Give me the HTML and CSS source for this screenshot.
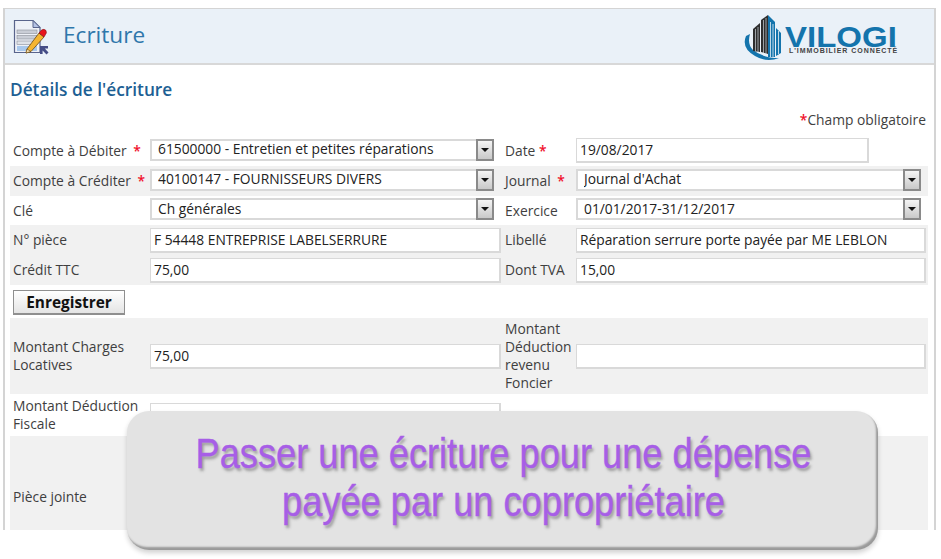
FILE: index.html
```html
<!DOCTYPE html>
<html lang="fr">
<head>
<meta charset="utf-8">
<title>Ecriture</title>
<link rel="stylesheet" href="styles.css">
</head>
<body>
<main class="panel">
  <header class="head">
    <svg class="doc-icon" viewBox="0 0 36 36" width="36" height="36" aria-hidden="true">
      <path d="M1.5 1.500H20L27 8.500V33.500H1.500Z" fill="#eef1f8" stroke="#59648c" stroke-width="1.200"/>
      <path d="M20 1.500V8.500H27Z" fill="#b4c2e4" stroke="#59648c" stroke-width="1"/>
      <rect x="4" y="11" width="20" height="3.500" fill="#c9cdd6" stroke="#8b8f99" stroke-width=".6"/>
      <rect x="4" y="16.500" width="20" height="3.500" fill="#c9cdd6" stroke="#8b8f99" stroke-width=".6"/>
      <rect x="4" y="22" width="20" height="3.500" fill="#dfe2e8" stroke="#8b8f99" stroke-width=".6"/>
      <rect x="4" y="27" width="20" height="5" fill="#a9c8ec"/>
      <path d="M14 30L26 14L31 18L18 32.500L13 34Z" fill="#f5b532" stroke="#6b4a12" stroke-width=".8"/>
      <path d="M14 30L18 32.500L13 34Z" fill="#f7e1b0" stroke="#6b4a12" stroke-width=".6"/>
      <path d="M26 14L28.500 11Q31 9.500 33 11.500Q34 14 32.500 15.500L31 18Z" fill="#e8141c" stroke="#7c1015" stroke-width=".6"/>
      <path d="M27 27H35V29.500H31.800L35.500 33.500L33.500 35.500L29.600 31.600V35H27Z" fill="#454d86"/>
    </svg>
    <h1 class="title">Ecriture</h1>
    <div class="logo">
      <svg class="logo-mark" viewBox="0 0 44 48" width="44" height="48" aria-hidden="true">
        <path d="M3 22Q-2 34 12 42Q24 49 36 44Q20 44 10 36Q4 30 7 20Z" fill="#1474ac"/>
        <path d="M10 37V15L17 9V38Z" fill="#2e2e2e"/>
        <path d="M18 38V6L25 1V40Z" fill="#2e2e2e"/>
        <path d="M25 1L32 8V43H25Z" fill="#1474ac"/>
        <path d="M27.500 8V43M30 10V43" stroke="#eaf1f8" stroke-width=".8"/>
        <path d="M12.500 15V37M15 13V38M20.500 6V39M23 4V40" stroke="#eaf1f8" stroke-width=".6"/>
        <path d="M33 14L38 19V39L33 42Z" fill="#1474ac"/>
        <path d="M35.500 17V40" stroke="#eaf1f8" stroke-width=".8"/>
      </svg>
      <div class="logo-text">
        <span class="logo-name">VILOGI</span>
        <span class="logo-tag">L'IMMOBILIER CONNECTÉ</span>
      </div>
    </div>
  </header>

  <h2 class="section">Détails de l'écriture</h2>
  <p class="required"><span class="star">*</span>Champ obligatoire</p>

  <form class="form">
    <div class="row">
      <label class="label">Compte à Débiter <span class="star">*</span></label>
      <div class="select"><select class="control"><option>61500000 - Entretien et petites réparations</option></select><span class="arrow"></span></div>
      <label class="label label-2">Date <span class="star star-tight">*</span></label>
      <input class="input input-short" value="19/08/2017">
    </div>
    <div class="row alt">
      <label class="label">Compte à Créditer <span class="star">*</span></label>
      <div class="select"><select class="control"><option>40100147 - FOURNISSEURS DIVERS</option></select><span class="arrow"></span></div>
      <label class="label label-2">Journal <span class="star">*</span></label>
      <div class="select select-r"><select class="control"><option>Journal d'Achat</option></select><span class="arrow"></span></div>
    </div>
    <div class="row row-short">
      <label class="label">Clé</label>
      <div class="select"><select class="control"><option>Ch générales</option></select><span class="arrow"></span></div>
      <label class="label label-2">Exercice</label>
      <div class="select select-r"><select class="control"><option>01/01/2017-31/12/2017</option></select><span class="arrow"></span></div>
    </div>
    <div class="row alt">
      <label class="label">N° pièce</label>
      <input class="input" value="F 54448 ENTREPRISE LABELSERRURE">
      <label class="label label-2">Libellé</label>
      <input class="input" value="Réparation serrure porte payée par ME LEBLON">
    </div>
    <div class="row alt">
      <label class="label">Crédit TTC</label>
      <input class="input" value="75,00">
      <label class="label label-2">Dont TVA</label>
      <input class="input" value="15,00">
    </div>
    <div class="actions"><button class="save" type="button">Enregistrer</button></div>
    <div class="row alt row-tall">
      <label class="label">Montant Charges Locatives</label>
      <input class="input" value="75,00">
      <label class="label label-2">Montant Déduction revenu Foncier</label>
      <input class="input">
    </div>
    <div class="row row-mid">
      <label class="label">Montant Déduction Fiscale</label>
      <input class="input">
    </div>
    <div class="row alt row-file">
      <label class="label">Pièce jointe</label>
    </div>
  </form>
</main>
<aside class="banner"><span class="banner-text">Passer une écriture pour une dépense<br>payée par un copropriétaire</span></aside>
</body>
</html>
```
FILE: styles.css
```css
* { box-sizing: border-box; }
html, body { margin: 0; height: 100%; background: #fff; overflow: hidden; }
body { font-family: "Open Sans", sans-serif; font-size: 13.800px; color: #3f3f3f; padding: 8px 5px 0 3px; }

.panel { height: 522px; border: 2px solid #d4d4d4; border-bottom: 0; border-top-width: 1px; overflow: hidden; }
.head { height: 56px; background: #eaf1f8; border-bottom: 2px solid #d8d8d8; display: flex; align-items: center; padding: 0 37px 0 8px; }
.doc-icon { flex: none; margin-top: 1px; }
.title { margin: -1px 0 0 14px; font-size: 22.600px; font-weight: 400; color: #2f77ab; line-height: 1; }
.logo { margin-left: auto; display: flex; align-items: flex-start; height: 50px; }
.logo-mark { flex: none; margin-top: 3px; }
.logo-text { display: flex; flex-direction: column; width: 112px; margin-left: -2px; padding-top: 16px; }
.logo-name { font-family: "Liberation Sans", sans-serif; font-size: 30px; font-weight: 700; line-height: 20px; color: #1474ac; transform: scaleX(1.1); transform-origin: left; }
.logo-tag { font-family: "Liberation Sans", sans-serif; font-size: 7px; line-height: 7px; font-weight: 700; color: #444; letter-spacing: .95px; white-space: nowrap; margin-left: 4px; }

.section { margin: 15px 0 0 5px; font-size: 17.300px; line-height: 20px; font-weight: 600; color: #1d5f94; }
.required { margin: 11px 8px 0 0; text-align: right; line-height: 18px; }
.star { color: #f0102c; font-weight: 600; }
.label .star { margin-left: 3px; }
.label .star-tight { margin-left: 0; }

.form { margin: 7px 6px 0 5px; }
.row { display: grid; grid-template-columns: 137px 351px 75px 350px; align-items: center; height: 30px; padding: 0 2px 0 3px; }
.row-short { height: 29px; }
.alt { background: #f1f1f1; }
.label { line-height: 18px; }
.label-2 { padding-left: 4px; }
.input, .control { font: 13.800px "Open Sans", sans-serif; color: #222; }
.input { width: 100%; height: 25px; background: #fff; border: solid #d9d9d9; border-width: 1px 2px 2px 1px; padding: 0 3px; outline: 0; }
.input-short { width: 293px; margin-bottom: 2px; }
.select { position: relative; height: 22px; width: 344px; margin-top: -3px; }
.select-r { width: 345px; }
.control { appearance: none; -webkit-appearance: none; display: block; width: 100%; height: 100%; background: #fff; border: 0; box-shadow: inset 0 0 0 2px #d9d9d9; border-radius: 0; padding: 0 0 2px 8px; outline: 0; }
.arrow { position: absolute; right: 0; top: 0; width: 18px; height: 22px; border: 2px solid #8a8a8a; background: linear-gradient(#f4f4f4, #c9c9c9); }
.arrow::after { content: ""; position: absolute; left: 3px; top: 7px; border: 4px solid transparent; border-top: 4px solid #111; border-bottom: 0; }

.actions { height: 33px; padding: 5px 0 0 3px; }
.save { display: block; width: 112px; height: 25px; font: 700 15.400px "Open Sans", sans-serif; color: #111; background: linear-gradient(#fff, #e4e4e4); border: 1px solid #8f8f8f; border-bottom-width: 2px; padding: 0; }
.row-tall { height: 76px; }
.row-mid { height: 42px; }
.row-file { height: 94px; padding-top: 28px; }

.banner { position: absolute; left: 127px; top: 411px; width: 751px; height: 139px; border-radius: 22px; background: #e3e3e3; box-shadow: inset -2px -3px 2px #999, 0 3px 5px rgba(0,0,0,.18); padding: 19px 0 0 2px; }
.banner-text { display: block; text-align: center; font-family: "Liberation Sans", sans-serif; font-size: 42px; line-height: 48px; color: #a75ee6; -webkit-text-stroke: .4px #a75ee6; text-shadow: 2px 3px 3px rgba(70,70,70,.45); white-space: nowrap; transform: scaleX(.862); }
```
